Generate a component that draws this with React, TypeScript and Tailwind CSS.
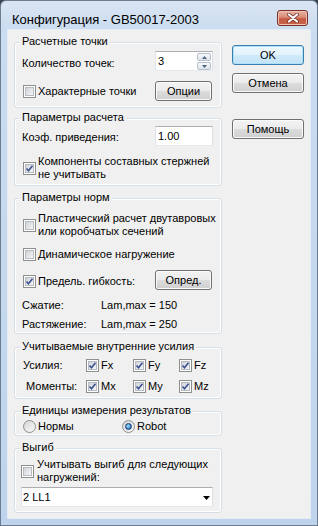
import React from "react";

function Check({ checked }: { checked?: boolean }) {
  return (
    <span className="relative flex h-[13px] w-[13px] shrink-0 border border-[#8e8f8f] bg-white p-[1px]">
      <span className="flex-1 border border-[#b7bcc3] bg-[linear-gradient(135deg,#cfd3d8,#f6f6f6)]" />
      {checked && (
        <svg className="absolute left-0 top-0" width="11" height="11" viewBox="0 0 11 11">
          <polyline points="2.5,5.5 4.5,7.7 8.5,2.8" fill="none" stroke="#3d5190" strokeWidth="1.6" />
        </svg>
      )}
    </span>
  );
}

function Radio({ checked }: { checked?: boolean }) {
  return (
    <span className="flex h-[13px] w-[13px] shrink-0 items-center justify-center rounded-full border border-[#8e8f8f] bg-[linear-gradient(135deg,#d4d4d4,#fbfbfb)]">
      {checked && (
        <span className="h-[7px] w-[7px] rounded-full border border-[#1c3f72] bg-[radial-gradient(circle_at_40%_40%,#b6e4ff,#3b8fd6_55%,#114a8a)]" />
      )}
    </span>
  );
}

function Btn({ label, def, cls }: { label: string; def?: boolean; cls: string }) {
  return (
    <div
      className={
        def
          ? `flex h-[20px] items-center justify-center rounded-[3px] border border-[#3c7fb1] bg-[linear-gradient(to_bottom,#eef8fe_0%,#e2f2fc_50%,#d0eafa_50%,#c3e3f7_100%)] shadow-[inset_0_0_0_1px_#aee0f8] ${cls}`
          : `flex h-[20px] items-center justify-center rounded-[3px] border border-[#707070] bg-[linear-gradient(to_bottom,#f3f3f3_0%,#ebebeb_50%,#dddddd_50%,#cfcfcf_100%)] shadow-[inset_0_0_0_1px_#fbfbfb] ${cls}`
      }
    >
      {label}
    </div>
  );
}

function Group({ title, cls, children }: { title: string; cls: string; children?: React.ReactNode }) {
  return (
    <div className={`rounded-[3px] border border-[#d5dfe5] shadow-[inset_0_0_0_1px_#ffffff] ${cls}`}>
      <div className="-mt-[8px] ml-[5px] w-fit bg-[#f0f0f0] px-[2px] leading-[13px]">{title}</div>
      {children}
    </div>
  );
}

export default function App() {
  return (
    <div className="h-[526px] w-[318px] overflow-hidden bg-[#3a4350] font-['Liberation_Sans',Arial,sans-serif] text-[11px] leading-[13px] text-black">
      <div className="flex h-full flex-col rounded-t-[6px] border border-[#6c7d92] bg-[linear-gradient(to_bottom,#dae5f2_0px,#cadcf0_30px,#bfd4ec_100%)]">
        {/* title bar */}
        <div className="flex h-[29px] shrink-0 justify-between">
          <div className="pl-[11px] pt-[11px] text-[13px] leading-[15px]">Конфигурация - GB50017-2003</div>
          <div className="mr-[9px] mt-[9px] flex h-[16px] w-[31px] items-center justify-center rounded-[3px] border border-[#7a3128] bg-[linear-gradient(to_bottom,#eab3a5_0%,#d98a78_45%,#c65a43_55%,#c8624a_100%)] shadow-[inset_0_0_0_1px_#f0c0b2]">
            <svg width="12" height="10" viewBox="0 0 12 10">
              <path d="M2 1.5 L10 8.5 M10 1.5 L2 8.5" stroke="#6b2a20" strokeWidth="3.6" strokeLinecap="round" />
              <path d="M2 1.5 L10 8.5 M10 1.5 L2 8.5" stroke="#ffffff" strokeWidth="2.2" strokeLinecap="round" />
            </svg>
          </div>
        </div>
        {/* client */}
        <div className="mx-[7px] flex h-[488px] shrink-0 bg-[#f0f0f0] shadow-[0_0_0_1px_#e4ecf6]">
          <div className="ml-[6px] flex w-[208px] flex-col">
            <Group title="Расчетные точки" cls="mt-[12px] h-[66px]">
              <div className="mt-[3px] flex h-[20px]">
                <div className="ml-[7px] mt-[6px] w-[133px]">Количество точек:</div>
                <div className="flex h-[20px] w-[58px] border border-[#abadb3] border-b-[#e3e9ef] border-l-[#e2e3ea] border-r-[#dbdfe6] bg-white">
                  <div className="flex flex-1 items-center pl-[2px]">3</div>
                  <div className="mr-[1px] mt-[1px] flex w-[14px] flex-col gap-[1px]">
                    <div className="flex h-[8px] items-center justify-center rounded-[2px] border border-[#b6bfcb] bg-[linear-gradient(to_bottom,#f8f9fa,#dde3ea)]">
                      <svg width="5" height="3" viewBox="0 0 5 3"><polygon points="0,3 5,3 2.5,0" fill="#4d6185" /></svg>
                    </div>
                    <div className="flex h-[8px] items-center justify-center rounded-[2px] border border-[#b6bfcb] bg-[linear-gradient(to_bottom,#f8f9fa,#dde3ea)]">
                      <svg width="5" height="3" viewBox="0 0 5 3"><polygon points="0,0 5,0 2.5,3" fill="#4d6185" /></svg>
                    </div>
                  </div>
                </div>
              </div>
              <div className="mt-[10px] flex h-[20px] items-center">
                <div className="ml-[8px] flex w-[132px] items-center">
                  <Check />
                  <span className="ml-[2px]">Характерные точки</span>
                </div>
                <Btn label="Опции" cls="w-[57px]" />
              </div>
            </Group>

            <Group title="Параметры расчета" cls="mt-[10px] h-[68px]">
              <div className="mt-[2px] flex h-[20px]">
                <div className="ml-[7px] mt-[5px] w-[133px]">Коэф. приведения:</div>
                <div className="flex h-[20px] w-[58px] items-center border border-[#abadb3] border-b-[#e3e9ef] border-l-[#e2e3ea] border-r-[#dbdfe6] bg-white pl-[2px]">
                  1.00
                </div>
              </div>
              <div className="ml-[8px] mt-[9px] flex items-center">
                <Check checked />
                <span className="ml-[2px]">
                  Компоненты составных стержней
                  <br />
                  не учитывать
                </span>
              </div>
            </Group>

            <Group title="Параметры норм" cls="mt-[12px] h-[136px]">
              <div className="ml-[8px] mt-[8px] flex items-center">
                <Check />
                <span className="ml-[2px]">
                  Пластический расчет двутавровых
                  <br />
                  или коробчатых сечений
                </span>
              </div>
              <div className="ml-[8px] mt-[10px] flex h-[13px] items-center">
                <Check />
                <span className="ml-[2px]">Динамическое нагружение</span>
              </div>
              <div className="mt-[9px] flex h-[20px] items-start">
                <div className="ml-[8px] mt-[5px] flex w-[132px] items-center">
                  <Check checked />
                  <span className="ml-[2px]">Предель. гибкость:</span>
                </div>
                <Btn label="Опред." cls="w-[57px]" />
              </div>
              <div className="mt-[9px] flex">
                <span className="ml-[7px] w-[79px]">Сжатие:</span>
                <span>Lam,max = 150</span>
              </div>
              <div className="mt-[6px] flex">
                <span className="ml-[7px] w-[79px]">Растяжение:</span>
                <span>Lam,max = 250</span>
              </div>
            </Group>

            <Group title="Учитываемые внутренние усилия" cls="mt-[13px] h-[52px]">
              <div className="mt-[6px] flex h-[13px] items-center">
                <span className="w-[71px] pl-[8px]">Усилия:</span>
                <div className="flex w-[47px] items-center"><Check checked /><span className="ml-[2px]">Fx</span></div>
                <div className="flex w-[46px] items-center"><Check checked /><span className="ml-[2px]">Fy</span></div>
                <div className="flex items-center"><Check checked /><span className="ml-[2px]">Fz</span></div>
              </div>
              <div className="mt-[8px] flex h-[13px] items-center">
                <span className="w-[71px] pl-[11px]">Моменты:</span>
                <div className="flex w-[47px] items-center"><Check checked /><span className="ml-[2px]">Mx</span></div>
                <div className="flex w-[46px] items-center"><Check checked /><span className="ml-[2px]">My</span></div>
                <div className="flex items-center"><Check checked /><span className="ml-[2px]">Mz</span></div>
              </div>
            </Group>

            <Group title="Единицы измерения результатов" cls="mt-[12px] h-[25px]">
              <div className="mt-[3px] flex h-[13px] items-center">
                <div className="ml-[8px] flex w-[99px] items-center"><Radio /><span className="ml-[2px]">Нормы</span></div>
                <div className="flex items-center"><Radio checked /><span className="ml-[2px]">Robot</span></div>
              </div>
            </Group>

            <Group title="Выгиб" cls="mt-[12px] h-[65px]">
              <div className="ml-[6px] mt-[4px] flex items-center">
                <Check />
                <span className="ml-[3px]">
                  Учитывать выгиб для следующих
                  <br />
                  нагружений:
                </span>
              </div>
              <div className="ml-[6px] mt-[3px] flex h-[20px] w-[192px] items-center justify-between border border-[#abadb3] border-b-[#e3e9ef] border-l-[#e2e3ea] border-r-[#dbdfe6] bg-white pl-[1px] pr-[2px]">
                <span>2 LL1</span>
                <svg className="mt-[1px]" width="7" height="4" viewBox="0 0 7 4"><polygon points="0,0 7,0 3.5,4" fill="#000" /></svg>
              </div>
            </Group>
          </div>

          <div className="ml-[10px] flex w-[72px] flex-col pt-[15px]">
            <Btn label="OK" def cls="w-[72px]" />
            <Btn label="Отмена" cls="mt-[8px] w-[72px]" />
            <Btn label="Помощь" cls="mt-[26px] w-[72px]" />
          </div>
        </div>
      </div>
    </div>
  );
}
